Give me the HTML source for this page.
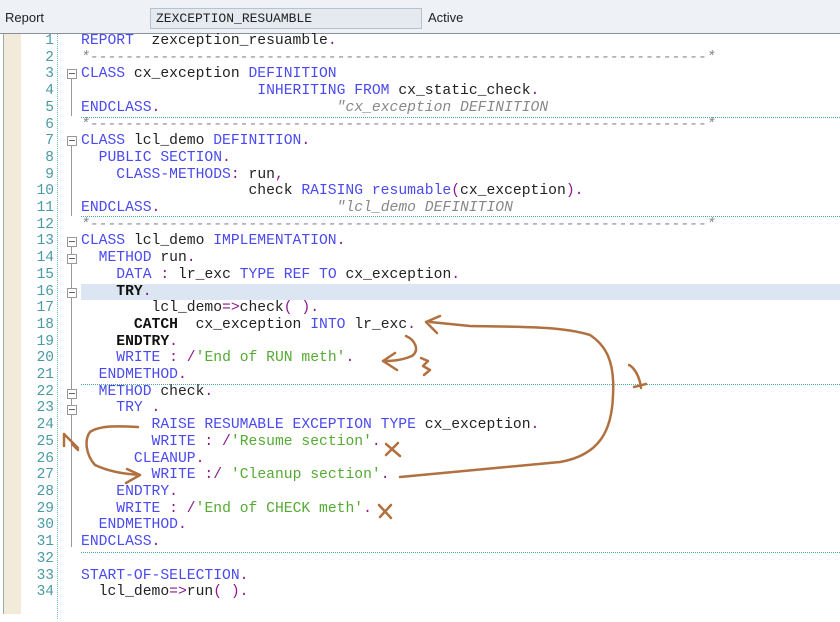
<!DOCTYPE html>
<html><head><meta charset="utf-8">
<style>
body{margin:0;width:840px;height:621px;overflow:hidden;background:#fff;font-family:"Liberation Sans",sans-serif;position:relative}
#hdr{position:absolute;left:0;top:0;width:840px;height:33px;background:#eef2f7}
#hdr .l{position:absolute;left:5px;top:10px;font-size:13px;color:#222}
#hdr .box{position:absolute;left:150px;top:8px;width:272px;height:21px;background:#e4eaf0;border:1px solid #b8c2cc;box-sizing:border-box;font-family:"Liberation Mono",monospace;font-size:13px;line-height:19px;padding-left:5px;color:#222}
#hdr .a{position:absolute;left:428px;top:10px;font-size:13px;color:#222}
#ed{position:absolute;left:0;top:33px;width:840px;height:588px;border-top:1px solid #8a9099}
#strip{position:absolute;left:3px;top:34px;width:17px;height:580px;background:#f2ebd9;border-left:1px solid #9aa}
#vline{position:absolute;left:57px;top:34px;height:585px;border-left:1px dotted #6bb}
.code{position:absolute;left:0;top:33px;font-family:"Liberation Mono",monospace;font-size:14.7px;line-height:16.7px;white-space:pre;color:#222}
.ln{position:absolute;left:0;width:54px;text-align:right;color:#4a9aa6;font-family:"Liberation Mono",monospace;font-size:14.5px}
.k{color:#4a4af0}.p{color:#8a1a8a}.s{color:#55aa33}.c{color:#888;font-style:italic}.b{font-weight:bold;color:#111}
.sep{position:absolute;left:81px;width:759px;border-top:1px dotted #4aa8a8}
.hl{position:absolute;left:81px;top:284px;width:759px;height:16px;background:#dce6f2}
.fold{position:absolute;left:67px;width:8px;height:8px;border:1px solid #999;background:#fff}
.fold:after{content:"";position:absolute;left:1px;top:3px;width:6px;height:1px;background:#666}
.vl{position:absolute;left:71px;border-left:1px solid #999}
</style></head><body>
<div id="hdr"><div class="l">Report</div><div class="box">ZEXCEPTION_RESUAMBLE</div><div class="a">Active</div></div>
<div id="ed"></div>
<div id="strip"></div>
<div id="vline"></div>
<div class="hl"></div>
<div class="sep" style="top:117px"></div>
<div class="sep" style="top:216px"></div>
<div class="sep" style="top:384px"></div>
<div class="sep" style="top:552px"></div>
<div class="fold" style="top:69px"></div><div class="vl" style="top:79px;height:37px"></div>
<div class="fold" style="top:136px"></div><div class="vl" style="top:146px;height:70px"></div>
<div class="fold" style="top:237px"></div><div class="vl" style="top:247px;height:300px"></div>
<div class="fold" style="top:254px"></div>
<div class="fold" style="top:288px"></div>
<div class="fold" style="top:389px"></div>
<div class="fold" style="top:405px"></div>
<div style="position:absolute;top:0;left:0">
<div class="ln" style="top:33px;line-height:16.7px;white-space:pre">1
2
3
4
5
6
7
8
9
10
11
12
13
14
15
16
17
18
19
20
21
22
23
24
25
26
27
28
29
30
31
32
33
34</div>
</div>
<div class="code" style="left:81px"><span class="k">REPORT</span>  zexception_resuamble<span class="p">.</span>
<span class="c">*----------------------------------------------------------------------*</span>
<span class="k">CLASS</span> cx_exception <span class="k">DEFINITION</span>
                    <span class="k">INHERITING FROM</span> cx_static_check<span class="p">.</span>
<span class="k">ENDCLASS</span><span class="p">.</span>                    <span class="c">"cx_exception DEFINITION</span>
<span class="c">*----------------------------------------------------------------------*</span>
<span class="k">CLASS</span> lcl_demo <span class="k">DEFINITION</span><span class="p">.</span>
  <span class="k">PUBLIC SECTION</span><span class="p">.</span>
    <span class="k">CLASS-METHODS</span><span class="p">:</span> run<span class="p">,</span>
                   check <span class="k">RAISING resumable</span><span class="p">(</span>cx_exception<span class="p">).</span>
<span class="k">ENDCLASS</span><span class="p">.</span>                    <span class="c">"lcl_demo DEFINITION</span>
<span class="c">*----------------------------------------------------------------------*</span>
<span class="k">CLASS</span> lcl_demo <span class="k">IMPLEMENTATION</span><span class="p">.</span>
  <span class="k">METHOD</span> run<span class="p">.</span>
    <span class="k">DATA</span> <span class="p">:</span> lr_exc <span class="k">TYPE REF TO</span> cx_exception<span class="p">.</span>
    <span class="b">TRY</span><span class="p">.</span>
        lcl_demo<span class="p">=&gt;</span>check<span class="p">( ).</span>
      <span class="b">CATCH</span>  cx_exception <span class="k">INTO</span> lr_exc<span class="p">.</span>
    <span class="b">ENDTRY</span><span class="p">.</span>
    <span class="k">WRITE</span> <span class="p">: /</span><span class="s">'End of RUN meth'</span><span class="p">.</span>
  <span class="k">ENDMETHOD</span><span class="p">.</span>
  <span class="k">METHOD</span> check<span class="p">.</span>
    <span class="k">TRY</span> <span class="p">.</span>
        <span class="k">RAISE RESUMABLE EXCEPTION TYPE</span> cx_exception<span class="p">.</span>
        <span class="k">WRITE</span> <span class="p">: /</span><span class="s">'Resume section'</span><span class="p">.</span>
      <span class="k">CLEANUP</span><span class="p">.</span>
        <span class="k">WRITE</span> <span class="p">:/</span> <span class="s">'Cleanup section'</span><span class="p">.</span>
    <span class="k">ENDTRY</span><span class="p">.</span>
    <span class="k">WRITE</span> <span class="p">: /</span><span class="s">'End of CHECK meth'</span><span class="p">.</span>
  <span class="k">ENDMETHOD</span><span class="p">.</span>
<span class="k">ENDCLASS</span><span class="p">.</span>

<span class="k">START-OF-SELECTION</span><span class="p">.</span>
  lcl_demo<span class="p">=&gt;</span>run<span class="p">( ).</span></div>
<svg style="position:absolute;left:0;top:0" width="840" height="621" fill="none" stroke="#b0703f" stroke-width="2.5" stroke-linecap="round" stroke-linejoin="round">
<path d="M400 477 C450 472 500 468 560 462 C600 455 612 430 613 395 C615 360 605 345 590 335 C560 326 520 327 470 326 L430 322"/>
<path d="M426 322 L440 316 M426 322 L437 333"/>
<path d="M629 365 C635 368 640 378 641 388 M634 387 L646 384"/>
<path d="M406 336 C415 340 420 350 412 356 C400 361 390 361 383 361 M383 361 L395 353 M383 361 L397 370"/>
<path d="M421 358 L428 361 L423 366 L430 370 L424 375"/>
<path d="M138 427 C120 426 100 425 90 432 C84 440 86 455 95 465 C110 472 125 474 140 475 M140 475 L127 469 M140 475 L126 483"/>
<path d="M64 434 L64 446 M64 434 L78 448 M72 444 L78 450"/>
<path d="M386 444 L400 456 M398 443 L386 455"/>
<path d="M379 505 L391 518 M391 505 L380 517"/>
</svg>
</body></html>
